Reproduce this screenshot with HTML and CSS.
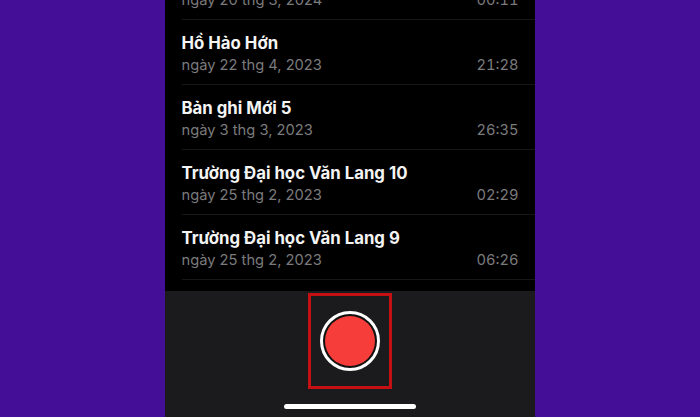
FILE: index.html
```html
<!DOCTYPE html>
<html lang="vi">
<head>
<meta charset="utf-8">
<title>Ghi âm</title>
<link rel="stylesheet" href="styles.css">
</head>
<body>
<main class="phone">
  <section class="list">
    <article class="row">
      <h2 class="title">Bản ghi Mới 6</h2>
      <div class="meta"><span>ngày 20 thg 3, 2024</span><span class="time">00:11</span></div>
    </article>
    <article class="row">
      <h2 class="title">Hồ Hảo Hớn</h2>
      <div class="meta"><span>ngày 22 thg 4, 2023</span><span class="time">21:28</span></div>
    </article>
    <article class="row">
      <h2 class="title">Bản ghi Mới 5</h2>
      <div class="meta"><span>ngày 3 thg 3, 2023</span><span class="time">26:35</span></div>
    </article>
    <article class="row">
      <h2 class="title">Trường Đại học Văn Lang 10</h2>
      <div class="meta"><span>ngày 25 thg 2, 2023</span><span class="time">02:29</span></div>
    </article>
    <article class="row">
      <h2 class="title">Trường Đại học Văn Lang 9</h2>
      <div class="meta"><span>ngày 25 thg 2, 2023</span><span class="time">06:26</span></div>
    </article>
  </section>
  <footer class="bar">
    <div class="highlight">
      <div class="record"><div class="dot"></div></div>
    </div>
    <div class="home"></div>
  </footer>
</main>
</body>
</html>
```
FILE: styles.css
```css
* { box-sizing: border-box; }
html, body { margin: 0; height: 100%; }
body {
  width: 700px;
  height: 417px;
  overflow: hidden;
  background: #440f96;
  display: flex;
  justify-content: center;
  font-family: Inter, "Liberation Sans", sans-serif;
}
.phone {
  width: 370px;
  height: 417px;
  display: flex;
  flex-direction: column;
  background: #000;
}
.list {
  height: 291px;
  flex: none;
  overflow: hidden;
  display: flex;
  flex-direction: column;
  justify-content: flex-end;
  padding: 0 0 11px 16.5px;
}
.row {
  flex: none;
  height: 65px;
  padding: 11.5px 16.5px 0 0;
  border-bottom: 1px solid #171717;
}
.title {
  margin: 0;
  font-size: 16.8px;
  line-height: 22px;
  font-weight: 700;
  color: #f4f4f4;
}
.meta {
  display: flex;
  justify-content: space-between;
  margin-top: 1px;
  font-size: 14.7px;
  line-height: 20px;
  color: #7b7b7d;
}
.time {
  font-variant-numeric: tabular-nums;
}
.bar {
  flex: 1;
  background: #1b1b1d;
  display: flex;
  flex-direction: column;
  align-items: center;
  padding-top: 2px;
}
.highlight {
  width: 84px;
  height: 96px;
  border: 3px solid #c40f13;
  display: flex;
  align-items: center;
  justify-content: center;
}
.record {
  width: 60px;
  height: 60px;
  border: 3px solid #fff;
  border-radius: 50%;
  background: #111;
  display: flex;
  align-items: center;
  justify-content: center;
}
.dot {
  width: 50px;
  height: 50px;
  border-radius: 50%;
  background: #f63d3a;
}
.home {
  width: 132px;
  height: 5px;
  margin-top: 15px;
  border-radius: 3px;
  background: #fff;
}
```
